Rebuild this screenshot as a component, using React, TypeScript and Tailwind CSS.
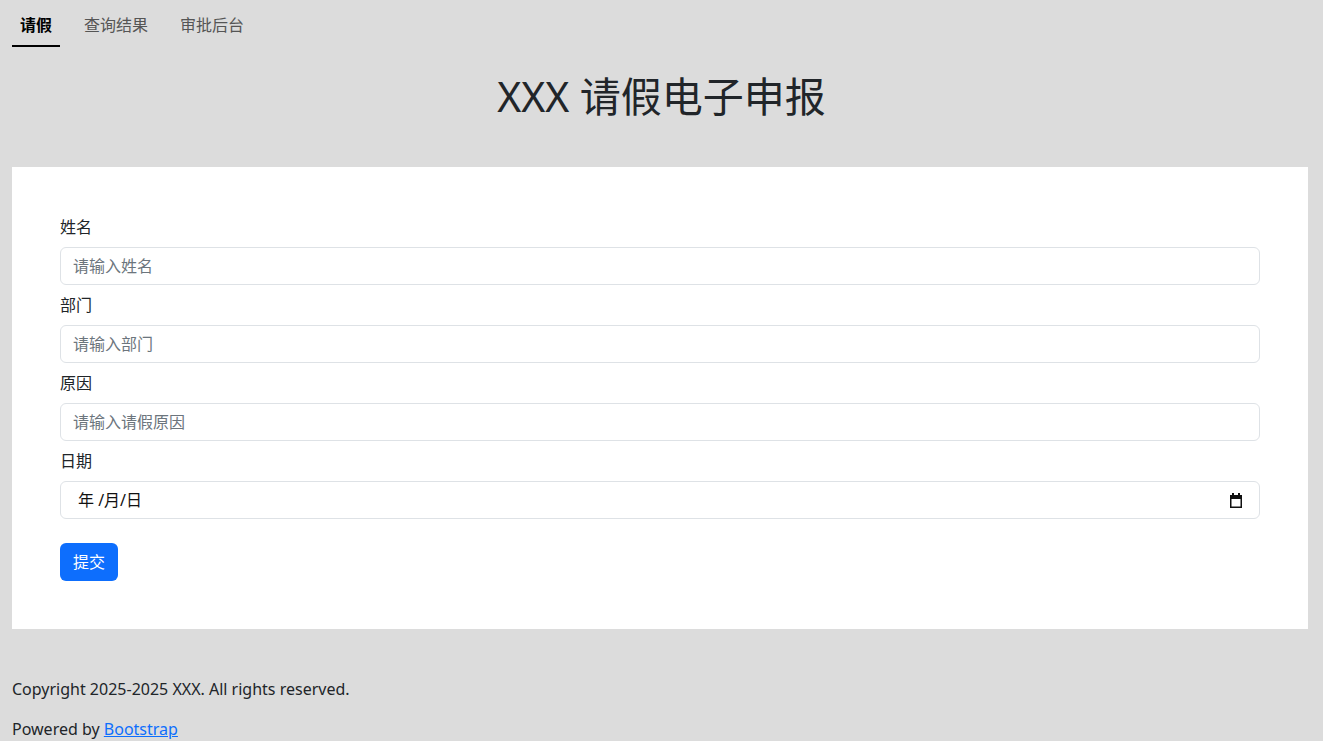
import { useState } from 'react';

const tabs = ['请假', '查询结果', '审批后台'];

const fields = [
  { label: '姓名', placeholder: '请输入姓名' },
  { label: '部门', placeholder: '请输入部门' },
  { label: '原因', placeholder: '请输入请假原因' },
];

function CalendarIcon() {
  return (
    <svg width="14" height="15" viewBox="0 0 14 15" className="shrink-0">
      <rect x="3" y="0" width="2" height="3" fill="#111" />
      <rect x="9" y="0" width="2" height="3" fill="#111" />
      <rect x="1" y="2" width="12" height="4" fill="#111" />
      <rect x="1.75" y="2.75" width="10.5" height="11.5" fill="none" stroke="#111" strokeWidth="1.5" />
    </svg>
  );
}

export default function App() {
  const [active, setActive] = useState(0);

  return (
    <div
      className="min-h-screen bg-[#dcdcdc] text-[#212529] text-base"
      style={{ fontFamily: '"Noto Sans", "Noto Sans CJK SC", sans-serif' }}
    >
      {/* Tabs */}
      <nav className="flex gap-4 px-3 h-[47px] items-stretch">
        {tabs.map((t, i) => (
          <button
            key={t}
            onClick={() => setActive(i)}
            className={
              i === active
                ? 'px-2 pt-[4px] border-b-2 border-black font-bold text-black leading-6'
                : 'px-2 pt-[4px] border-b-2 border-transparent text-[#555] leading-6'
            }
          >
            {t}
          </button>
        ))}
      </nav>

      {/* Title */}
      <h1 className="text-center text-[41px] leading-[48px] font-normal pt-[25px] pb-[47px]">
        XXX 请假电子申报
      </h1>

      {/* Form card */}
      <div className="ml-3 mr-[15px] bg-white p-12">
        {fields.map((f) => (
          <div key={f.label} className="mb-2">
            <label className="block leading-6 mb-2">{f.label}</label>
            <input
              type="text"
              placeholder={f.placeholder}
              className="block w-full h-[38px] px-3 border border-[#dee2e6] rounded-md text-base outline-none placeholder:text-[#6c757d] focus:border-[#86b7fe]"
            />
          </div>
        ))}
        <div className="mb-2">
          <label className="block leading-6 mb-2">日期</label>
          <div className="flex items-center justify-between w-full h-[38px] pl-[17px] pr-[16px] border border-[#dee2e6] rounded-md">
            <span className="text-[#111]">年 /月/日</span>
            <CalendarIcon />
          </div>
        </div>
        <button className="mt-4 h-[38px] px-[13px] bg-[#0d6efd] text-white rounded-md leading-6 hover:bg-[#0b5ed7]">
          提交
        </button>
      </div>

      {/* Footer */}
      <footer className="px-3 pt-12 pb-4">
        <p className="leading-6 mb-4">Copyright 2025-2025 XXX. All rights reserved.</p>
        <p className="leading-6">
          Powered by{' '}
          <a href="#" className="text-[#0d6efd] underline">
            Bootstrap
          </a>
        </p>
      </footer>
    </div>
  );
}
